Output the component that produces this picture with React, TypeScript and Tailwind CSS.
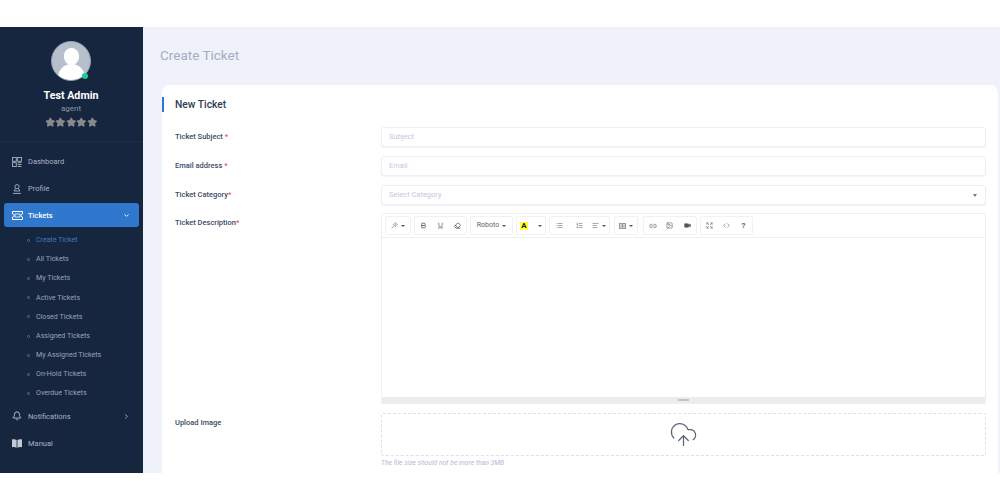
import { Bell, ChevronDown, ChevronRight, Star, CloudUpload, Bold, Underline, Eraser, Wand, List, ListOrdered, AlignLeft, Link2, Image, Video, Expand, Code } from "lucide-react"
import type { ReactNode } from "react"

const subItems = [
  "Create Ticket",
  "All Tickets",
  "My Tickets",
  "Active Tickets",
  "Closed Tickets",
  "Assigned Tickets",
  "My Assigned Tickets",
  "On-Hold Tickets",
  "Overdue Tickets",
]

function Caret() {
  return <span className="ml-[3px] inline-block border-x-[2px] border-t-[2px] border-x-transparent border-t-[#555]" />
}

function ToolGroup({ children, w }: { children: ReactNode; w: string }) {
  return <div className={`flex h-[19px] shrink-0 rounded-[2px] border border-[#f1f1f4] bg-white ${w}`}>{children}</div>
}

function ToolBtn({ children }: { children: ReactNode }) {
  return <div className="flex h-full flex-1 items-center justify-center text-[#666]">{children}</div>
}

function Field({ label, mark, children }: { label: string; mark: string; children: ReactNode }) {
  return (
    <div className="flex">
      <div className="w-[206px] shrink-0 pt-[3px] text-[7.5px] leading-[14px] font-medium text-[#3b4a63]">
        {label}
        <span className="text-[#e0526b]">{mark}</span>
      </div>
      <div className="min-w-0 flex-1">{children}</div>
    </div>
  )
}

function TextBox({ text, caret }: { text: string; caret?: boolean }) {
  return (
    <div className="flex h-[20px] items-center justify-between rounded-[3px] border border-[#eceef5] bg-white px-[7px] text-[7.5px] text-[#c5c8de] shadow-[0_1px_1px_rgba(220,225,240,0.4)]">
      {text}
      {caret && <span className="mr-[1px] inline-block border-x-[2.5px] border-t-[3px] border-x-transparent border-t-[#777]" />}
    </div>
  )
}

function DashIcon() {
  return (
    <svg width="10" height="10" viewBox="0 0 10 10" fill="none" stroke="currentColor" strokeWidth="0.9">
      <rect x="0.5" y="0.5" width="3.8" height="3.8" />
      <rect x="5.7" y="0.5" width="3.8" height="3.8" />
      <rect x="0.5" y="5.7" width="3.8" height="3.8" />
      <path d="M5.7 5.7h3.8M5.7 7.6h3.8M5.7 9.5h3.8" />
    </svg>
  )
}

function ProfileIcon() {
  return (
    <svg width="10" height="10" viewBox="0 0 10 10" fill="none" stroke="currentColor" strokeWidth="0.9">
      <circle cx="5" cy="2.7" r="2.1" />
      <path d="M3.4 4.6 2.2 7h5.6L6.6 4.6M1 9.4h8" />
    </svg>
  )
}

function TicketIcon() {
  return (
    <svg width="11" height="9" viewBox="0 0 11 9" fill="none" stroke="currentColor" strokeWidth="1">
      <path d="M.5.5h10v2.4a1.6 1.6 0 0 0 0 3.2v2.4H.5V6.1a1.6 1.6 0 0 0 0-3.2z" />
      <path d="M3 3h5v3H3z" strokeWidth="0.8" />
    </svg>
  )
}

function BookIcon() {
  return (
    <svg width="10" height="9" viewBox="0 0 10 9" fill="#c4cbd8">
      <path d="M0 .6c1.6-.5 3.2-.3 4.6.5v7.6C3.2 8 1.6 7.8 0 8.2zM5.4 1.1c1.4-.8 3-1 4.6-.5v7.6c-1.6-.4-3.2-.2-4.6.5z" />
    </svg>
  )
}

function BarsIcon() {
  return (
    <svg width="7" height="6" viewBox="0 0 7 6" fill="none" stroke="#888" strokeWidth="0.8">
      <rect x="0.4" y="0.4" width="6.2" height="5.2" />
      <path d="M.4 2.1h6.2M.4 3.9h6.2M3.5.4v5.2" />
    </svg>
  )
}

export default function App() {
  return (
    <div className="h-[500px] w-[1000px] overflow-hidden bg-white pt-[27px] font-['Roboto',sans-serif]">
      <div className="flex h-[446px]">
        <aside className="w-[143px] shrink-0 bg-[#17263f] text-[#aab2c2]">
          <div className="flex h-[115px] flex-col items-center border-b border-[#1d2d48] pt-[14px] pr-[1px]">
            <div className="relative h-[40px] w-[40px] rounded-full border border-[#8fa0b5] bg-[#b6bfcb]">
              <div className="h-full w-full overflow-hidden rounded-full">
                <div className="mx-auto mt-[6px] h-[17px] w-[15px] rounded-full bg-white" />
                <div className="mx-auto -mt-[1px] h-[16px] w-[27px] rounded-t-full bg-white" />
              </div>
              <span className="absolute right-[2px] bottom-[1px] h-[6px] w-[6px] rounded-full bg-[#1fc98f]" />
            </div>
            <div className="mt-[8px] text-[10.7px] leading-[14px] font-bold text-white">Test Admin</div>
            <div className="text-[8px] leading-[11px] text-[#8f96a6]">agent</div>
            <div className="mt-[3px] flex">
              {[0, 1, 2, 3, 4].map((i) => (
                <Star key={i} size={10.6} className="fill-[#8a8a8c] text-[#8a8a8c]" />
              ))}
            </div>
          </div>
          <nav className="px-[4px] text-[7.5px]">
            <div className="mt-[6px] flex h-[27px] items-center gap-[6px] pl-[8px]">
              <DashIcon /> Dashboard
            </div>
            <div className="flex h-[27px] items-center gap-[6px] pl-[8px]">
              <ProfileIcon /> Profile
            </div>
            <div className="mt-[1px] flex h-[24px] items-center gap-[5px] rounded-[3px] bg-[#2f78cd] px-[9px] pt-[1px] pl-[8px] font-medium text-white">
              <TicketIcon /> Tickets
              <ChevronDown size={7} className="ml-auto" strokeWidth={3} />
            </div>
            <ul className="mt-[4px]">
              {subItems.map((item, i) => (
                <li key={item} className={`flex h-[19.1px] items-center gap-[6px] pl-[23px] text-[7.1px] ${i === 0 ? "text-[#3479c9]" : "text-[#9aa3b5]"}`}>
                  <span className="h-[3px] w-[3px] rounded-full border-[0.5px] border-[#5d6e88]" />
                  {item}
                </li>
              ))}
            </ul>
            <div className="flex h-[27px] items-center gap-[6px] pl-[8px]">
              <Bell size={10} className="text-[#d4d9e2]" /> Notifications
              <ChevronRight size={7} className="mr-[9px] ml-auto" strokeWidth={3} />
            </div>
            <div className="flex h-[27px] items-center gap-[6px] pl-[8px]">
              <BookIcon /> Manual
            </div>
          </nav>
        </aside>

        <main className="min-w-0 flex-1 bg-[#eff2fb] pl-[19px]">
          <div className="-ml-[2px] flex h-[58px] items-center pb-[2px] text-[13.5px] text-[#a3adc2]">Create Ticket</div>
          <section className="mr-[2px] h-[400px] rounded-t-[8px] bg-white pt-[12px]">
            <div className="flex h-[15px] items-center border-l-[2px] border-[#2f78cd] pl-[11px] text-[10.3px] font-medium text-[#2f3d55]">New Ticket</div>
            <div className="mt-[15px] flex flex-col gap-[9px] pr-[12px] pl-[13px]">
              <Field label="Ticket Subject " mark="*"><TextBox text="Subject" /></Field>
              <Field label="Email address " mark="*"><TextBox text="Email" /></Field>
              <Field label="Ticket Category" mark="*"><TextBox text="Select Category" caret /></Field>
              <div className="-mt-[1px]">
                <Field label="Ticket Description" mark="*">
                  <div className="flex h-[191px] flex-col rounded-[2px] border border-[#eeeff4]">
                    <div className="flex h-[24px] shrink-0 items-center border-b border-[#eeeff4] pl-[3px]">
                      <ToolGroup w="w-[26px]"><ToolBtn><Wand size={7} /><Caret /></ToolBtn></ToolGroup>
                      <div className="ml-[3px]">
                        <ToolGroup w="w-[53px]">
                          <ToolBtn><Bold size={7} strokeWidth={3} /></ToolBtn>
                          <ToolBtn><Underline size={7} strokeWidth={2.5} /></ToolBtn>
                          <ToolBtn><Eraser size={7} strokeWidth={3} /></ToolBtn>
                        </ToolGroup>
                      </div>
                      <div className="ml-[3px]">
                        <ToolGroup w="w-[43px]"><ToolBtn><span className="text-[7px]">Roboto</span><Caret /></ToolBtn></ToolGroup>
                      </div>
                      <div className="ml-[3px]">
                        <ToolGroup w="w-[30px]">
                          <ToolBtn><span className="bg-[#ffff3a] px-[1px] text-[8px] leading-[8px] font-bold text-[#222]">A</span></ToolBtn>
                          <ToolBtn><Caret /></ToolBtn>
                        </ToolGroup>
                      </div>
                      <div className="ml-[3px]">
                        <ToolGroup w="w-[61px]">
                          <ToolBtn><List size={7} /></ToolBtn>
                          <ToolBtn><ListOrdered size={7} /></ToolBtn>
                          <ToolBtn><AlignLeft size={7} /><Caret /></ToolBtn>
                        </ToolGroup>
                      </div>
                      <div className="ml-[4px]">
                        <ToolGroup w="w-[24px]"><ToolBtn><BarsIcon /><Caret /></ToolBtn></ToolGroup>
                      </div>
                      <div className="ml-[5px]">
                        <ToolGroup w="w-[54px]">
                          <ToolBtn><Link2 size={8} /></ToolBtn>
                          <ToolBtn><Image size={7} /></ToolBtn>
                          <ToolBtn><Video size={7} className="fill-[#555]" /></ToolBtn>
                        </ToolGroup>
                      </div>
                      <div className="ml-[3px]">
                        <ToolGroup w="w-[53px]">
                          <ToolBtn><Expand size={7} /></ToolBtn>
                          <ToolBtn><Code size={7} /></ToolBtn>
                          <ToolBtn><span className="text-[8px] font-bold">?</span></ToolBtn>
                        </ToolGroup>
                      </div>
                    </div>
                    <div className="flex-1" />
                    <div className="flex h-[6px] items-center justify-center bg-[#ececec]">
                      <span className="h-[2px] w-[11px] bg-[#c4c4c4]" />
                    </div>
                  </div>
                </Field>
              </div>
              <Field label="Upload Image" mark="">
                <div className="flex h-[43px] items-center justify-center rounded-[2px] border border-dashed border-[#dfe1ea]">
                  <CloudUpload size={29} strokeWidth={1} className="text-[#5a6478]" />
                </div>
                <div className="mt-[2px] text-[6.8px] leading-[10px] text-[#b4b8d2] italic">The file size should not be more than 3MB</div>
              </Field>
            </div>
          </section>
        </main>
      </div>
    </div>
  )
}
